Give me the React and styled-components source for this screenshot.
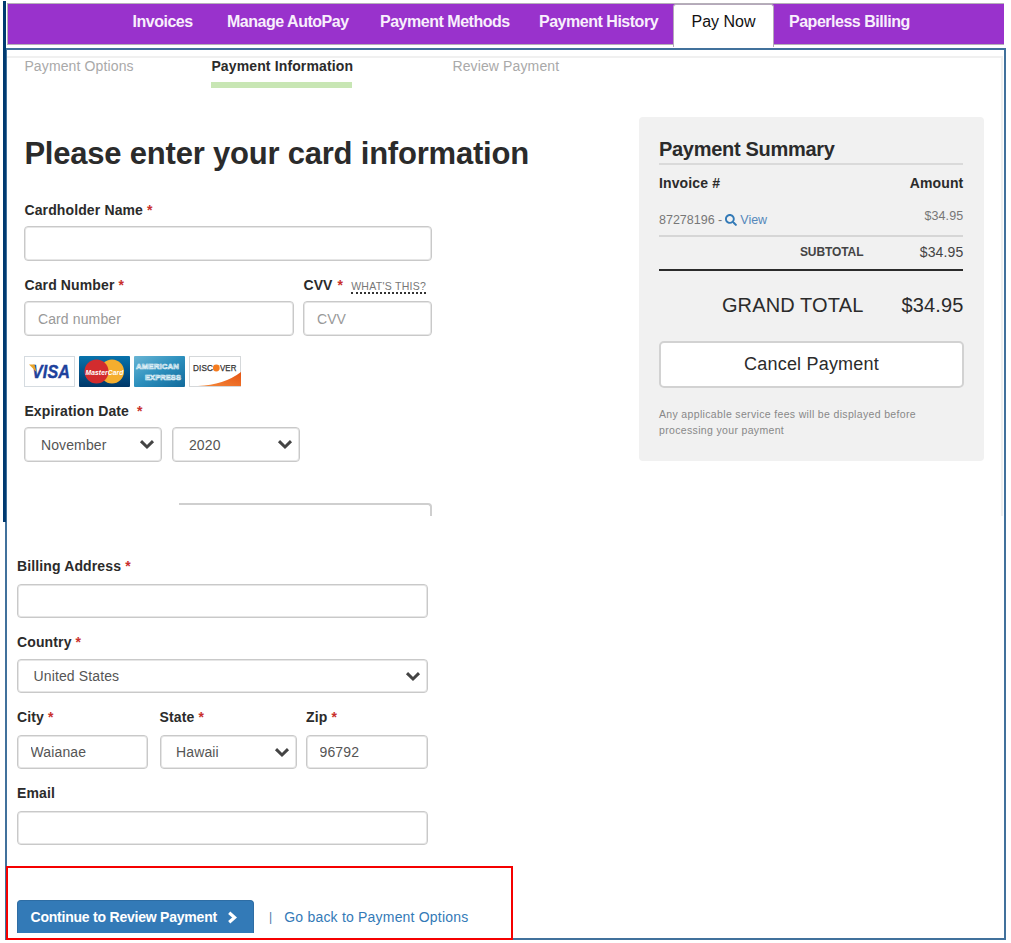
import React from "react";
import styled, { createGlobalStyle } from "styled-components";
import { FaSearch } from "react-icons/fa";

const GlobalStyle = createGlobalStyle`
  *, *::before, *::after { box-sizing: border-box; }
  html, body { margin: 0; padding: 0; background: #fff; }
  body, input, select, button {
    font-family: "Liberation Sans", Arial, sans-serif;
    font-size: 14px;
    letter-spacing: 0.13px;
    color: #2b2b2b;
  }
`;

const Page = styled.div`
  position: relative;
  width: 1011px;
  height: 943px;
  padding-top: 3px;
  overflow: hidden;
`;

const EdgeBar = styled.div`
  position: absolute;
  left: 3px;
  top: 1px;
  width: 3px;
  height: 521px;
  background: #003a70;
`;

const Nav = styled.nav`
  display: flex;
  width: 997px;
  height: 42px;
  margin-left: 7px;
  padding-left: 124.5px;
  background: #9932cc;
  border: solid #b5b0b8;
  border-width: 1px 0 1px 1px;
`;

const NavItem = styled.a`
  width: ${(p) => p.$width}px;
  line-height: 35px;
  color: #f8effc;
  font-size: 16px;
  font-weight: bold;
  letter-spacing: -0.48px;
  white-space: nowrap;
`;

const ActiveTab = styled.a`
  width: 101px;
  height: 43px;
  margin-right: 15px;
  background: #fff;
  border: 1px solid #b5a8bb;
  border-bottom: 0;
  border-radius: 3px 3px 0 0;
  line-height: 33px;
  text-align: center;
  font-size: 16px;
  letter-spacing: 0;
  color: #111;
`;

const Panel = styled.main`
  width: 1001px;
  height: 892px;
  margin: 3px 0 0 5px;
  padding-top: 6px;
  border: 2px solid #41719c;
`;

const CardSection = styled.section`
  display: flex;
  width: 996px;
  height: 460px;
  border: solid #f0f0f0;
  border-width: 2px 2px 0 0;
  overflow: hidden;
`;

const CardForm = styled.div`
  width: 632px;
  padding-left: 17.4px;
`;

const Steps = styled.div`
  display: flex;
  height: 30px;
`;

const Step = styled.div`
  height: 30px;
  width: ${(p) => p.$width}px;
  margin-right: ${(p) => p.$gap || 0}px;
  line-height: 17px;
  white-space: nowrap;
  color: ${(p) => (p.$active ? "#2b2b2b" : "#a9a9a9")};
  font-weight: ${(p) => (p.$active ? "bold" : "normal")};
  border-bottom: ${(p) => (p.$active ? "6px solid #c8e6b4" : "0")};
`;

const Heading = styled.h1`
  margin: 46px 0 27px;
  line-height: 40px;
  font-size: 31px;
  letter-spacing: -0.21px;
  white-space: nowrap;
`;

const Row = styled.div`
  display: flex;
  gap: ${(p) => p.$gap || 0}px;
  margin-bottom: ${(p) => p.$below || 0}px;
`;

const Field = styled.label`
  display: block;
  width: ${(p) => p.$width}px;
  margin-bottom: ${(p) => p.$below || 0}px;
`;

const Label = styled.div`
  height: ${(p) => p.$height || 25}px;
  line-height: 19px;
  font-weight: bold;
  white-space: nowrap;
`;

const Required = styled.span`
  color: #c9302c;
  margin-left: ${(p) => p.$space || 4}px;
`;

const Input = styled.input`
  display: block;
  width: 100%;
  height: ${(p) => p.$height || 35}px;
  padding: 0 13px 0 12.5px;
  border: 1px solid #c9c9c9;
  border-radius: 4px;
  box-shadow: inset 0 0 0 1px #e6e6e6;
  background: #fff;
  color: #555;
  outline: none;
  &::placeholder { color: #999; opacity: 1; }
`;

const SelectBox = styled.div`
  position: relative;
  width: ${(p) => p.$width || "100%"};
`;

const SelectControl = styled(Input)`
  appearance: none;
  padding: 0 15.5px;
`;

const Arrow = styled.svg`
  position: absolute;
  right: 7px;
  top: 12px;
`;

const Hint = styled.span`
  margin-left: 8px;
  font-size: 10.5px;
  font-weight: normal;
  letter-spacing: 0.28px;
  color: #777;
  border-bottom: 2px dotted #333;
  display: inline-block;
  height: 14px;
  line-height: 13px;
  vertical-align: top;
  margin-top: 4px;
`;

const Cards = styled.div`
  display: flex;
  gap: 4px;
  margin: 20px 0 15px;
  height: 31px;
`;

const ClippedInput = styled.div`
  width: 253px;
  height: 13px;
  margin: 41px 0 0 155px;
  border: solid #cfcfcf;
  border-width: 2px 2px 0 0;
  border-radius: 0 4px 0 0;
`;

const Summary = styled.aside`
  width: 345px;
  height: 344px;
  margin-top: 59px;
  padding: 21px 20px 0;
  border-radius: 4px;
  background: #f1f1f1;
`;

const SummaryTitle = styled.h2`
  margin: 0;
  width: 304px;
  height: 27px;
  line-height: 22px;
  font-size: 20px;
  letter-spacing: -0.3px;
  border-bottom: 2px solid #dadada;
`;

const SummaryLine = styled.div`
  display: flex;
  justify-content: ${(p) => (p.$end ? "flex-end" : "space-between")};
  width: 304.4px;
  height: ${(p) => p.$height}px;
  line-height: ${(p) => p.$line}px;
  font-size: ${(p) => p.$size || 14}px;
  font-weight: ${(p) => (p.$bold ? "bold" : "normal")};
  color: ${(p) => p.$color || "#2b2b2b"};
  border-bottom: ${(p) => p.$rule || "0"};
`;

const InvoiceRef = styled.span`
  display: flex;
  align-items: center;
  padding-top: 2px;
  letter-spacing: 0;
`;

const ViewLink = styled.a`
  display: flex;
  align-items: center;
  gap: 3px;
  margin-left: 3px;
  color: #5588bb;
  svg { color: #337ab7; }
`;

const SubtotalLabel = styled.b`
  font-size: 12px;
  letter-spacing: -0.1px;
`;

const Amount = styled.span`
  width: 100px;
  text-align: right;
`;

const CancelButton = styled.button`
  display: block;
  width: 305px;
  height: 47px;
  margin-bottom: 19px;
  border: 2px solid #d2d2d2;
  border-radius: 5px;
  background: #fff;
  font-size: 18px;
  letter-spacing: 0.2px;
`;

const FinePrint = styled.p`
  margin: 0;
  font-size: 10.5px;
  line-height: 15.5px;
  letter-spacing: 0.34px;
  white-space: nowrap;
  color: #888;
`;

const BillingSection = styled.section`
  padding: 41px 0 0 10px;
  width: 421px;
`;

const Actions = styled.div`
  display: flex;
  height: 33px;
  margin-top: 55px;
  line-height: 34px;
  white-space: nowrap;
`;

const ContinueButton = styled.button`
  display: flex;
  align-items: center;
  gap: 10px;
  width: 237px;
  height: 33px;
  padding: 0 0 0 12.5px;
  border: 1px solid #2e6da4;
  border-bottom: 0;
  border-radius: 4px 4px 0 0;
  background: #337ab7;
  color: #fff;
  font-weight: bold;
  letter-spacing: -0.22px;
  flex: none;
`;

const Divider = styled.span`
  margin: 0 12px 0 15px;
  color: #4a7aa8;
  font-size: 12px;
`;

const BackLink = styled.a`
  color: #337ab7;
  letter-spacing: 0.2px;
`;

const Callout = styled.div`
  position: absolute;
  left: 6px;
  top: 866px;
  width: 507px;
  height: 74px;
  border: 2px solid #f50000;
`;

function SelectField({ value, height, width }) {
  return (
    <SelectBox $width={width}>
      <SelectControl as="select" $height={height} defaultValue={value}>
        <option>{value}</option>
      </SelectControl>
      <Arrow width="16" height="11" viewBox="0 0 16 11">
        <path d="M2 2.2 L8 8 L14 2.2" fill="none" stroke="#444" strokeWidth="3" />
      </Arrow>
    </SelectBox>
  );
}

function Visa() {
  return (
    <svg width="51" height="31" viewBox="0 0 51 31">
      <rect x="0.5" y="0.5" width="50" height="30" fill="#fff" stroke="#d5dbe0" />
      <text x="8" y="21.5" fontSize="18" fontWeight="bold" fontStyle="italic" fill="#1d419c" stroke="#1d419c" strokeWidth="0.4" textLength="38" lengthAdjust="spacingAndGlyphs">VISA</text>
      <path d="M5 8.5 H10.5 L12.5 16 Z" fill="#e8a52b" />
    </svg>
  );
}

function MasterCard() {
  return (
    <svg width="51" height="31" viewBox="0 0 51 31">
      <defs>
        <linearGradient id="mc" x1="0" y1="0" x2="0" y2="1">
          <stop offset="0" stopColor="#0873ac" />
          <stop offset="1" stopColor="#003768" />
        </linearGradient>
      </defs>
      <rect width="51" height="31" rx="1" fill="url(#mc)" />
      <circle cx="33" cy="15.5" r="12" fill="#f5ae2e" />
      <circle cx="17.5" cy="15.5" r="12" fill="#d22c2e" />
      <text x="6.5" y="18.5" fontSize="8" fontWeight="bold" fontStyle="italic" fill="#fff" textLength="38" lengthAdjust="spacingAndGlyphs">MasterCard</text>
    </svg>
  );
}

function Amex() {
  return (
    <svg width="51" height="31" viewBox="0 0 51 31">
      <defs>
        <linearGradient id="amex" x1="0" y1="0" x2="1" y2="1">
          <stop offset="0" stopColor="#69b5d4" />
          <stop offset="0.5" stopColor="#2c8fbd" />
          <stop offset="1" stopColor="#126a9b" />
        </linearGradient>
      </defs>
      <rect width="51" height="31" rx="1" fill="url(#amex)" />
      <g fill="#3d94bc" stroke="#e3f2f8" strokeWidth="0.7" fontSize="8" fontWeight="bold">
        <text x="2" y="13" textLength="43" lengthAdjust="spacingAndGlyphs">AMERICAN</text>
        <text x="11" y="23.5" textLength="36" lengthAdjust="spacingAndGlyphs">EXPRESS</text>
      </g>
    </svg>
  );
}

function Discover() {
  return (
    <svg width="52" height="31" viewBox="0 0 52 31">
      <defs>
        <linearGradient id="disc" x1="0" y1="1" x2="1" y2="0">
          <stop offset="0" stopColor="#f58a3c" />
          <stop offset="1" stopColor="#e55312" />
        </linearGradient>
      </defs>
      <rect x="0.5" y="0.5" width="51" height="30" fill="#fff" stroke="#d5d8da" />
      <path d="M9 30 Q35 29 52 16 V30 Z" fill="url(#disc)" />
      <circle cx="27.3" cy="12" r="3.4" fill="#f47b20" />
      <g fontSize="9" fill="#333" stroke="#333" strokeWidth="0.25">
        <text x="4" y="15" textLength="20" lengthAdjust="spacingAndGlyphs">DISC</text>
        <text x="31" y="15" textLength="16.5" lengthAdjust="spacingAndGlyphs">VER</text>
      </g>
    </svg>
  );
}

function Chevron() {
  return (
    <svg width="11" height="13" viewBox="0 0 11 13">
      <path d="M2.2 1.7 L7.6 6.5 L2.2 11.3" fill="none" stroke="#fff" strokeWidth="3.2" />
    </svg>
  );
}

export default function App() {
  return (
    <Page>
      <GlobalStyle />
      <EdgeBar />
      <Nav>
        <NavItem $width={94.5}>Invoices</NavItem>
        <NavItem $width={153}>Manage AutoPay</NavItem>
        <NavItem $width={159}>Payment Methods</NavItem>
        <NavItem $width={134}>Payment History</NavItem>
        <ActiveTab>Pay Now</ActiveTab>
        <NavItem>Paperless Billing</NavItem>
      </Nav>
      <Panel>
        <CardSection>
          <CardForm>
            <Steps>
              <Step $width={109} $gap={78}>Payment Options</Step>
              <Step $width={141} $gap={100} $active>Payment Information</Step>
              <Step $width={109}>Review Payment</Step>
            </Steps>
            <Heading>Please enter your card information</Heading>
            <Field $width={408} $below={15}>
              <Label>Cardholder Name<Required>*</Required></Label>
              <Input />
            </Field>
            <Row $gap={9}>
              <Field $width={270}>
                <Label>Card Number<Required>*</Required></Label>
                <Input placeholder="Card number" />
              </Field>
              <Field $width={129}>
                <Label>CVV<Required $space={5}>*</Required><Hint>WHAT'S THIS?</Hint></Label>
                <Input placeholder="CVV" />
              </Field>
            </Row>
            <Cards>
              <Visa />
              <MasterCard />
              <Amex />
              <Discover />
            </Cards>
            <Label>Expiration Date<Required $space={8}>*</Required></Label>
            <Row $gap={10}>
              <SelectField value="November" width="138px" />
              <SelectField value="2020" width="128px" />
            </Row>
            <ClippedInput />
          </CardForm>
          <Summary>
            <SummaryTitle>Payment Summary</SummaryTitle>
            <SummaryLine $height={38} $line={37} $bold>
              <span>Invoice #</span>
              <span>Amount</span>
            </SummaryLine>
            <SummaryLine $height={34} $line={27} $size={12.5} $color="#777" $rule="2px solid #d6d6d6">
              <InvoiceRef>
                87278196 -
                <ViewLink><FaSearch size={12} />View</ViewLink>
              </InvoiceRef>
              <span>$34.95</span>
            </SummaryLine>
            <SummaryLine $height={34} $line={30} $end $color="#444" $rule="2px solid #2b2b2b">
              <SubtotalLabel>SUBTOTAL</SubtotalLabel>
              <Amount>$34.95</Amount>
            </SummaryLine>
            <SummaryLine $height={70} $line={68} $size={20} $end>
              <span>GRAND TOTAL</span>
              <Amount>$34.95</Amount>
            </SummaryLine>
            <CancelButton>Cancel Payment</CancelButton>
            <FinePrint>
              Any applicable service fees will be displayed before
              <br />
              processing your payment
            </FinePrint>
          </Summary>
        </CardSection>
        <BillingSection>
          <Field $width={411} $below={15}>
            <Label $height={27}>Billing Address<Required>*</Required></Label>
            <Input $height={34} />
          </Field>
          <Field $width={411} $below={15}>
            <Label $height={26}>Country<Required>*</Required></Label>
            <SelectField value="United States" height={34} />
          </Field>
          <Row $below={15}>
            <Field $width={142.5}>
              <Label $height={27}>City<Required>*</Required></Label>
              <SelectBox $width="131px"><Input $height={34} defaultValue="Waianae" /></SelectBox>
            </Field>
            <Field $width={146.5}>
              <Label $height={27}>State<Required>*</Required></Label>
              <SelectField value="Hawaii" height={34} width="137px" />
            </Field>
            <Field $width={122}>
              <Label $height={27}>Zip<Required>*</Required></Label>
              <Input $height={34} defaultValue="96792" />
            </Field>
          </Row>
          <Field $width={411}>
            <Label $height={27}>Email</Label>
            <Input $height={34} />
          </Field>
          <Actions>
            <ContinueButton>
              Continue to Review Payment
              <Chevron />
            </ContinueButton>
            <Divider>|</Divider>
            <BackLink>Go back to Payment Options</BackLink>
          </Actions>
        </BillingSection>
      </Panel>
      <Callout />
    </Page>
  );
}
